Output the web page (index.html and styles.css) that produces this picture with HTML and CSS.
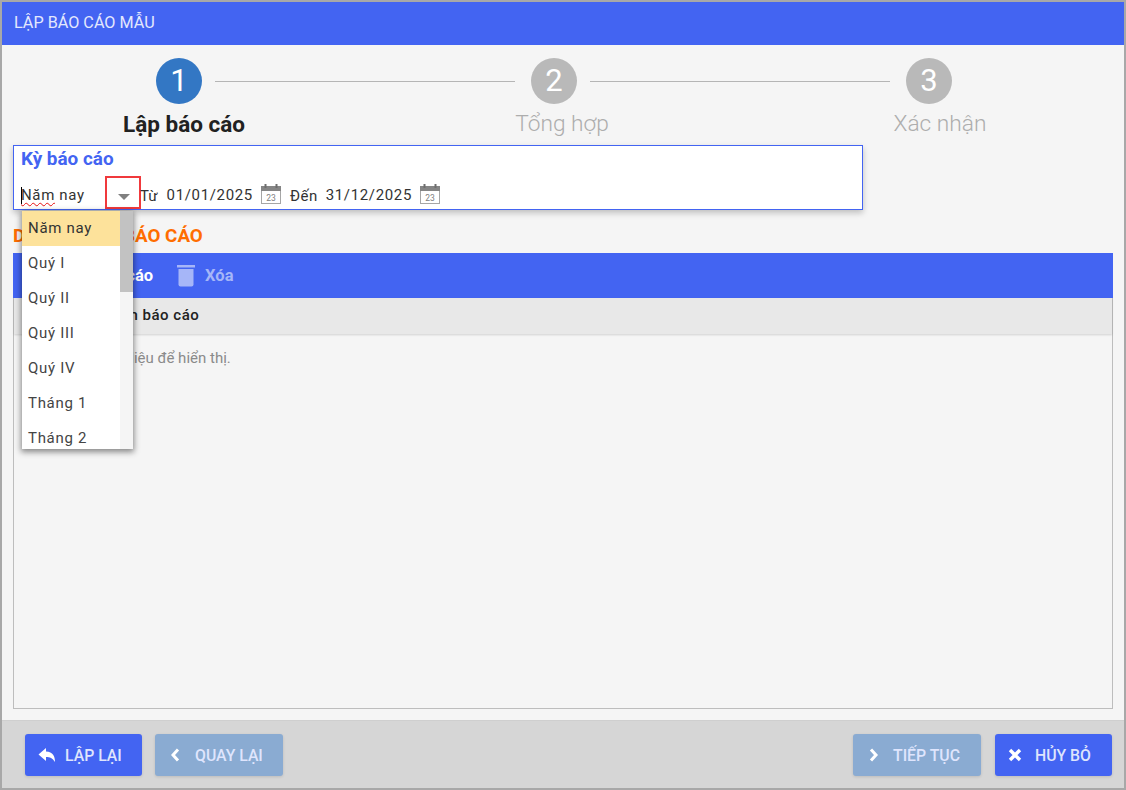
FILE: index.html
```html
<!DOCTYPE html>
<html lang="vi">
<head>
<meta charset="utf-8">
<title>Lập báo cáo mẫu</title>
<link rel="stylesheet" href="styles.css">
</head>
<body>
<div class="dialog">
  <header class="titlebar">LẬP BÁO CÁO MẪU</header>
  <main class="content">
    <div class="stepper">
      <div class="step-track">
        <span class="circle active">1</span><span class="line"></span>
        <span class="circle">2</span><span class="line"></span>
        <span class="circle">3</span>
      </div>
      <div class="step-labels">
        <span class="step-label active">Lập báo cáo</span>
        <span class="step-label">Tổng hợp</span>
        <span class="step-label">Xác nhận</span>
      </div>
    </div>

    <section class="period">
      <h2 class="period-title">Kỳ báo cáo</h2>
      <div class="period-row">
        <div class="combo">
          <span class="combo-value"><span class="caret"></span><span class="squiggle">Năm</span> nay</span>
          <span class="combo-btn"><span class="arrow"></span></span>
        </div>
        <span class="lbl lbl-from">Từ</span>
        <span class="date">01/01/2025</span>
        <svg class="cal" viewBox="0 0 20 20" width="20" height="20" aria-hidden="true">
          <rect x="0.5" y="2.500" width="19" height="17" fill="#fff" stroke="#a6a6a6"/>
          <rect x="0" y="2" width="20" height="5" fill="#858585"/>
          <rect x="3.500" y="0" width="2" height="4" fill="#6e6e6e"/>
          <rect x="14.500" y="0" width="2" height="4" fill="#6e6e6e"/>
          <text x="10" y="16.500" class="cal-num">23</text>
        </svg>
        <span class="lbl lbl-to">Đến</span>
        <span class="date">31/12/2025</span>
        <svg class="cal" viewBox="0 0 20 20" width="20" height="20" aria-hidden="true">
          <rect x="0.5" y="2.500" width="19" height="17" fill="#fff" stroke="#a6a6a6"/>
          <rect x="0" y="2" width="20" height="5" fill="#858585"/>
          <rect x="3.500" y="0" width="2" height="4" fill="#6e6e6e"/>
          <rect x="14.500" y="0" width="2" height="4" fill="#6e6e6e"/>
          <text x="10" y="16.500" class="cal-num">23</text>
        </svg>
      </div>
    </section>

    <ul class="dropdown">
      <li class="opt selected">Năm nay</li>
      <li class="opt">Quý I</li>
      <li class="opt">Quý II</li>
      <li class="opt">Quý III</li>
      <li class="opt">Quý IV</li>
      <li class="opt">Tháng 1</li>
      <li class="opt">Tháng 2</li>
      <li class="scrollbar"><span class="thumb"></span></li>
    </ul>

    <h2 class="list-title">DANH SÁCH BÁO CÁO</h2>
    <section class="grid">
      <div class="toolbar">
        <span class="tool">Thêm báo cáo</span>
        <span class="tool dim">
          <svg viewBox="0 0 18 22" width="18" height="22" aria-hidden="true">
            <rect x="0" y="0" width="18" height="2.500" fill="currentColor"/>
            <path d="M1.500 4h15v15.500a2 2 0 0 1-2 2h-11a2 2 0 0 1-2-2z" fill="currentColor"/>
          </svg>
          Xóa
        </span>
      </div>
      <div class="grid-head">Tên báo cáo</div>
      <div class="grid-empty">Không có dữ liệu để hiển thị.</div>
    </section>
  </main>
  <footer class="footer">
    <div class="btn-group">
      <button class="btn">
        <svg viewBox="0 0 18 16" width="18" height="16" aria-hidden="true"><path d="M8 1 0.5 7.500 8 14v-4c4 0 6.500 1 9 5 0-6-2-10-9-10.500z" fill="#fff"/></svg>
        LẬP LẠI
      </button>
      <button class="btn off">
        <svg viewBox="0 0 10 14" width="10" height="14" aria-hidden="true"><path d="M7 1.500 2 7l5 5.500" fill="none" stroke="#fff" stroke-width="3"/></svg>
        QUAY LẠI
      </button>
    </div>
    <div class="btn-group right">
      <button class="btn off">
        <svg viewBox="0 0 10 14" width="10" height="14" aria-hidden="true"><path d="M2 1.500 7 7l-5 5.500" fill="none" stroke="#fff" stroke-width="3"/></svg>
        TIẾP TỤC
      </button>
      <button class="btn wide">
        <svg viewBox="0 0 14 14" width="14" height="14" aria-hidden="true"><path d="M2 2l10 10M12 2 2 12" fill="none" stroke="#fff" stroke-width="3.400"/></svg>
        HỦY BỎ
      </button>
    </div>
  </footer>
</div>
</body>
</html>
```
FILE: styles.css
```css
* { box-sizing: border-box; }
html, body { margin: 0; height: 100%; }
body { font-family: Roboto, "Noto Sans", sans-serif; color: #212121; background: #f5f5f5; }

.dialog {
  width: 1126px; height: 790px;
  border: 2px solid #a8a8a8;
  display: flex; flex-direction: column;
  position: relative;
  background: #f5f5f5;
}
.titlebar {
  height: 43px; flex: none;
  background: #4364f2; color: #e3e8fd;
  font-size: 16.200px; font-weight: 400;
  line-height: 42px; padding-left: 12px;
}
.content { flex: 1; padding: 0 11px; display: flex; flex-direction: column; min-height: 0; }

/* stepper */
.stepper { height: 100px; flex: none; }
.step-track { display: flex; align-items: center; padding: 13px 0 0 143px; }
.circle {
  width: 46px; height: 46px; border-radius: 50%; flex: none;
  background: #b9b9b9; color: #fff;
  font-size: 31px; line-height: 46px; text-align: center;
}
.circle.active { background: #3377c4; }
.line { width: 300px; height: 1px; background: #b5b5b5; flex: none; margin: 0 16px 0 13px; }
.step-labels { display: grid; grid-template-columns: 378px 378px 378px; margin-top: 5px; margin-left: -18px; }
.step-label {
  text-align: center; font-size: 22.700px; line-height: 30px;
  color: #adadad; font-weight: 300;
}
.step-label.active { color: #212121; font-weight: 700; font-size: 22.500px; }

/* period */
.period {
  width: 850px; height: 65px; flex: none;
  background: #fff; border: 1px solid #4364f2;
  box-shadow: 0 3px 6px rgba(0,0,0,.22);
  padding: 0 7px;
  display: flex; flex-direction: column;
}
.period-title { margin: 0; height: 26px; font-size: 18.900px; line-height: 26px; font-weight: 700; color: #4364f2; }
.period-row { display: flex; align-items: center; height: 37px; font-size: 15px; letter-spacing: .65px; color: #333; padding-top: 9px; }
.combo { display: flex; align-items: center; width: 119px; flex: none; position: relative; }
.combo-value { width: 84px; position: relative; }
.caret { position: absolute; left: 0; top: 1px; width: 1px; height: 17px; background: #000; }
.squiggle { text-decoration: underline wavy #e81010 1.200px; text-underline-offset: 2px; }
.combo-btn {
  position: absolute; left: 84px; top: -10px;
  width: 36px; height: 33px; border: 2px solid #f0393c;
  display: flex; align-items: center; justify-content: center;
}
.arrow { width: 0; height: 0; border: 6px solid transparent; border-top: 6px solid #808080; border-bottom: 0; margin-top: 9px; margin-left: 1px; }
.lbl-from { margin-right: 9px; letter-spacing: 0; }
.lbl-to { margin: 0 8px 0 9px; letter-spacing: .5px; }
.lbl { position: relative; top: 1px; }
.cal { margin-left: 8px; flex: none; position: relative; top: -1px; }
.cal-num { font-size: 8.500px; letter-spacing: 0; fill: #808080; text-anchor: middle; font-family: Roboto, sans-serif; }

/* dropdown */
.dropdown {
  position: absolute; left: 20px; top: 209px;
  width: 111px; height: 238px; margin: 0; padding: 0;
  list-style: none; background: #fff; overflow: hidden;
  box-shadow: 0 2px 6px 1px rgba(0,0,0,.45);
  font-size: 15px; letter-spacing: .7px; color: #444;
  z-index: 5;
}
.opt { height: 35px; line-height: 34px; padding-left: 6px; width: 98px; }
.opt.selected { background: #fde29b; color: #333; }
.scrollbar { position: absolute; top: 0; right: 0; width: 13px; height: 100%; background: #f5f5f5; }
.thumb { display: block; height: 81px; background: #c2c2c2; }

/* list */
.list-title { margin: 15px 0 0; height: 28px; font-size: 18.800px; line-height: 22px; font-weight: 700; color: #ff6d00; }
.grid { width: 1100px; height: 456px; flex: none; border: 1px solid #bdbdbd; border-top: 0; display: flex; flex-direction: column; }
.toolbar {
  height: 45px; flex: none; margin: 0 -1px;
  background: #4364f2; color: #fff;
  display: flex; align-items: center; gap: 24px; padding-left: 35px;
  font-size: 16.500px; font-weight: 700;
}
.tool { display: flex; align-items: center; gap: 10px; }
.tool.dim { color: #a6b6f8; }
.grid-head {
  height: 36px; flex: none; background: #e8e8e8;
  line-height: 34px; padding-left: 98px;
  font-size: 15px; font-weight: 500; letter-spacing: .5px; color: #212121;
  box-shadow: 0 1px 2px rgba(0,0,0,.15);
}
.grid-empty { padding: 15px 0 0 28px; font-size: 15px; color: #8a8a8a; }

/* footer */
.footer {
  height: 68px; flex: none; margin-top: 11px;
  background: #d6d6d6; border-top: 1px solid #cfcfcf;
  display: flex; justify-content: space-between;
  padding: 13px 12px 0 23px;
}
.btn-group { display: flex; gap: 13px; }
.btn-group.right { gap: 14px; }
.btn {
  width: 117px; height: 42px; padding: 0 0 0 13px;
  display: flex; align-items: center; gap: 9px;
  border: 0; border-radius: 3px;
  background: #4364f2; color: #dfe5fd;
  font: 500 15.800px Roboto, sans-serif;
  box-shadow: 0 1px 3px rgba(0,0,0,.12);
}
.btn.off { width: 128px; background: #8aabd2; padding: 0 0 0 16px; gap: 14px; }
.btn.wide { gap: 13px; }
```
